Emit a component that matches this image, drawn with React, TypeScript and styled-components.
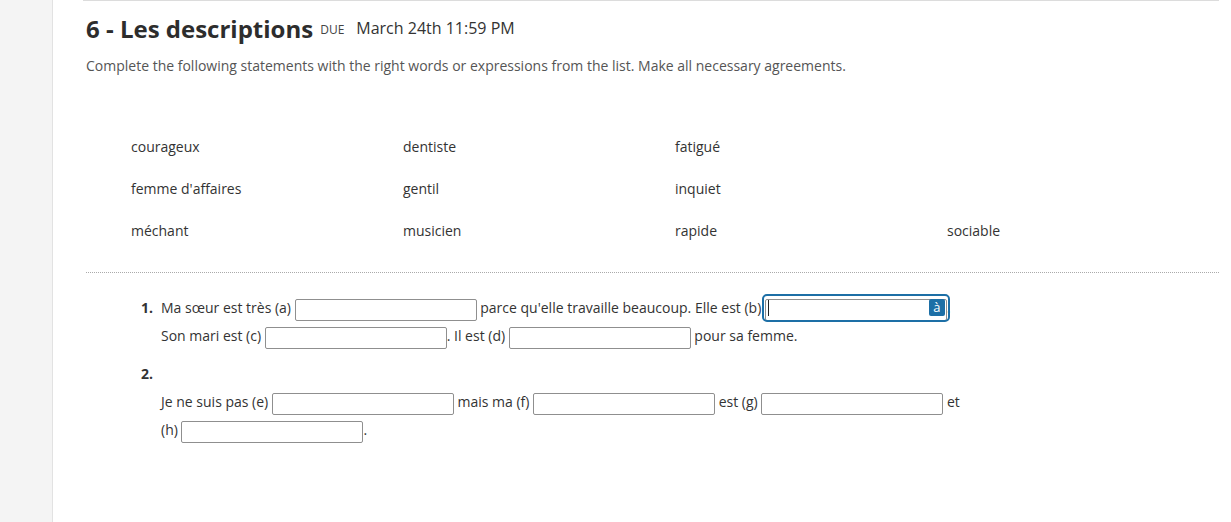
import React from "react"
import styled, { createGlobalStyle } from "styled-components"

const GlobalStyle = createGlobalStyle`
  html, body {
    margin: 0;
    padding: 0;
    background: #fff;
  }
  body {
    font-family: "Open Sans", "Liberation Sans", sans-serif;
    color: #333;
  }
`

const words = [
  ["courageux", "dentiste", "fatigué", ""],
  ["femme d'affaires", "gentil", "inquiet", ""],
  ["méchant", "musicien", "rapide", "sociable"],
]

const Page = styled.div`
  display: flex;
  height: 522px;
  overflow: hidden;
`

const Sidebar = styled.aside`
  width: 52px;
  flex: none;
  background: #f4f4f4;
  border-right: 1px solid #e2e2e2;
`

const Main = styled.main`
  flex: 1;
  padding: 0 13px 0 30px;
`

const Header = styled.header`
  border-top: 1px solid #dcdcdc;
  padding: 11px 0 0 3px;
`

const TitleRow = styled.div`
  display: flex;
  align-items: center;
  height: 34px;
`

const Title = styled.h1`
  margin: 0;
  font-size: 24px;
  font-weight: 700;
  line-height: 34px;
  color: #2d2d2d;
`

const Due = styled.span`
  margin: 0 0 0 7px;
  font-size: 12px;
  text-transform: uppercase;
  color: #444;
`

const DueDate = styled.span`
  margin-left: 12px;
  font-size: 16px;
  color: #333;
  position: relative;
  top: -1px;
`

const Instructions = styled.p`
  margin: 10px 0 0;
  font-size: 14px;
  line-height: 20px;
  color: #555;
`

const WordBank = styled.div`
  display: grid;
  grid-template-columns: repeat(4, 272px);
  grid-auto-rows: 42px;
  margin: 50px 0 0 48px;
`

const Word = styled.div`
  font-size: 14px;
  line-height: 42px;
  color: #333;
`

const Divider = styled.hr`
  margin: 20px 0 0 3px;
  border: none;
  border-top: 1px dotted #aaa;
`

const Questions = styled.ol`
  list-style: none;
  margin: 21px 0 0;
  padding: 0 0 0 58px;
`

const Question = styled.li`
  display: flex;
  margin-bottom: 10px;
  font-size: 14px;
  line-height: 28px;
  color: #333;
`

const Num = styled.span`
  width: 20px;
  flex: none;
  font-weight: 700;
`

const Body = styled.div<{ $stacked?: boolean }>`
  width: 810px;
  padding-top: ${p => (p.$stacked ? "28px" : "0")};
`

const BlankWrap = styled.span<{ $focused?: boolean }>`
  position: relative;
  display: inline-block;
  vertical-align: middle;
  width: 182px;
  height: 22px;
  margin-top: -3px;
  border-radius: 2px;
  outline: ${p => (p.$focused ? "2px solid #1d6fa6" : "none")};
  outline-offset: 1px;
`

const Input = styled.input`
  box-sizing: border-box;
  width: 100%;
  height: 100%;
  margin: 0;
  padding: 0 4px;
  border: 1px solid #8f8f8f;
  border-radius: 2px;
  font: inherit;
  background: #fff;
`

const Caret = styled.span`
  position: absolute;
  left: 3px;
  top: 3px;
  width: 1px;
  height: 16px;
  background: #222;
`

const Accent = styled.span`
  position: absolute;
  right: 2px;
  top: 2px;
  width: 16px;
  height: 17px;
  border-radius: 2px;
  background: #1d6fa6;
  color: #fff;
  font-size: 13px;
  line-height: 16px;
  text-align: center;
`

const Blank = ({ focused }: { focused?: boolean }) => (
  <BlankWrap $focused={focused}>
    <Input type="text" />
    {focused && (
      <>
        <Caret />
        <Accent>à</Accent>
      </>
    )}
  </BlankWrap>
)

export default function App() {
  return (
    <>
      <GlobalStyle />
      <Page>
        <Sidebar />
        <Main>
          <Header>
            <TitleRow>
              <Title>6 - Les descriptions</Title>
              <Due>Due</Due>
              <DueDate>March 24th 11:59 PM</DueDate>
            </TitleRow>
            <Instructions>
              Complete the following statements with the right words or expressions from the list. Make all necessary
              agreements.
            </Instructions>
          </Header>

          <WordBank>
            {words.flat().map((w, i) => (
              <Word key={i}>{w}</Word>
            ))}
          </WordBank>

          <Divider />

          <Questions>
            <Question>
              <Num>1.</Num>
              <Body>
                Ma sœur est très (a) <Blank /> parce qu'elle travaille beaucoup. Elle est (b) <Blank focused />.
                Son mari est (c) <Blank />. Il est (d) <Blank /> pour sa femme.
              </Body>
            </Question>
            <Question>
              <Num>2.</Num>
              <Body $stacked>
                Je ne suis pas (e) <Blank /> mais ma (f) <Blank /> est (g) <Blank /> et (h) <Blank />.
              </Body>
            </Question>
          </Questions>
        </Main>
      </Page>
    </>
  )
}
